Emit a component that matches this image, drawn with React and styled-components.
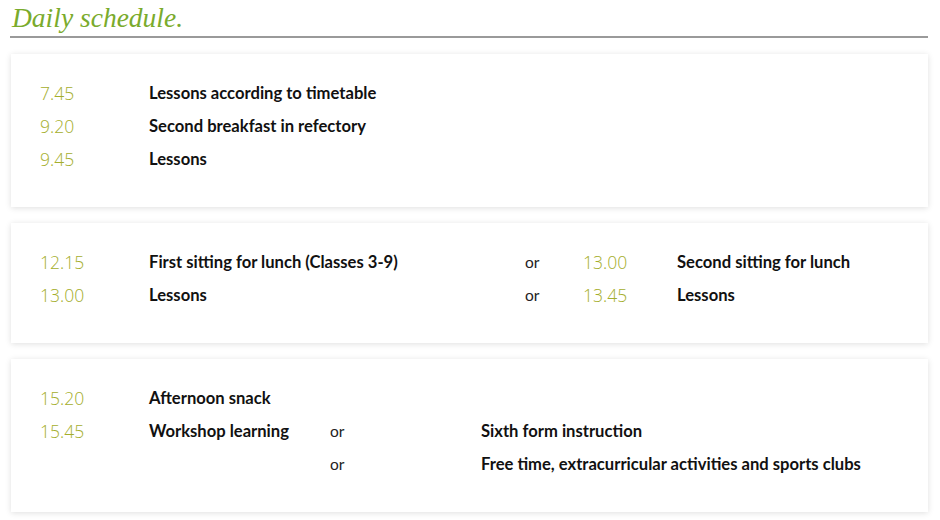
import styled, { createGlobalStyle } from 'styled-components';

const GlobalStyle = createGlobalStyle`
  body {
    margin: 0;
    background: #ffffff;
    font-family: "Open Sans", "Noto Sans", sans-serif;
  }
`;

const Page = styled.div`
  width: 918px;
  padding: 2px 0 8px 10px;
  display: flex;
  flex-direction: column;
  gap: 16px;
`;

const Title = styled.h2`
  margin: 0;
  padding: 0 0 2px 2px;
  font-family: "Liberation Serif", "DejaVu Serif", serif;
  font-style: italic;
  font-weight: 400;
  font-size: 27.5px;
  line-height: 32px;
  color: #7aab2c;
  border-bottom: 2px solid #9a9a9a;
`;

const Card = styled.section`
  margin-left: 1px;
  padding: 22px 29px 32px;
  background: #fff;
  box-shadow: 0 1px 6px rgba(0, 0, 0, 0.13);
`;

const Row = styled.div`
  display: grid;
  grid-template-columns: ${(p) => p.$cols};
  align-items: center;
  height: 33px;
`;

const Time = styled.span`
  font-family: "Open Sans", sans-serif;
  font-weight: 300;
  font-size: 17.5px;
  color: #a4ae2c;
`;

const Activity = styled.span`
  font-family: "Lato", "Noto Sans", sans-serif;
  font-weight: 700;
  font-size: 16.6px;
  color: #111;
  white-space: nowrap;
`;

const Or = styled.span`
  font-family: "Lato", "Noto Sans", sans-serif;
  font-size: 15.5px;
  color: #222;
`;

const morning = [
  ['7.45', 'Lessons according to timetable'],
  ['9.20', 'Second breakfast in refectory'],
  ['9.45', 'Lessons'],
];

const lunch = [
  ['12.15', 'First sitting for lunch (Classes 3-9)', '13.00', 'Second sitting for lunch'],
  ['13.00', 'Lessons', '13.45', 'Lessons'],
];

const App = () => {
  return (
    <>
      <GlobalStyle />
      <Page>
        <Title>Daily schedule.</Title>
        <Card>
          {morning.map(([t, a]) => (
            <Row key={t} $cols="109px 1fr">
              <Time>{t}</Time>
              <Activity>{a}</Activity>
            </Row>
          ))}
        </Card>
        <Card>
          {lunch.map(([t, a, t2, a2]) => (
            <Row key={t} $cols="109px 376px 58px 94px 1fr">
              <Time>{t}</Time>
              <Activity>{a}</Activity>
              <Or>or</Or>
              <Time>{t2}</Time>
              <Activity>{a2}</Activity>
            </Row>
          ))}
        </Card>
        <Card>
          <Row $cols="109px 1fr">
            <Time>15.20</Time>
            <Activity>Afternoon snack</Activity>
          </Row>
          <Row $cols="109px 181px 151px 1fr">
            <Time>15.45</Time>
            <Activity>Workshop learning</Activity>
            <Or>or</Or>
            <Activity>Sixth form instruction</Activity>
          </Row>
          <Row $cols="109px 181px 151px 1fr">
            <span />
            <span />
            <Or>or</Or>
            <Activity>Free time, extracurricular activities and sports clubs</Activity>
          </Row>
        </Card>
      </Page>
    </>
  );
};

export default App;
